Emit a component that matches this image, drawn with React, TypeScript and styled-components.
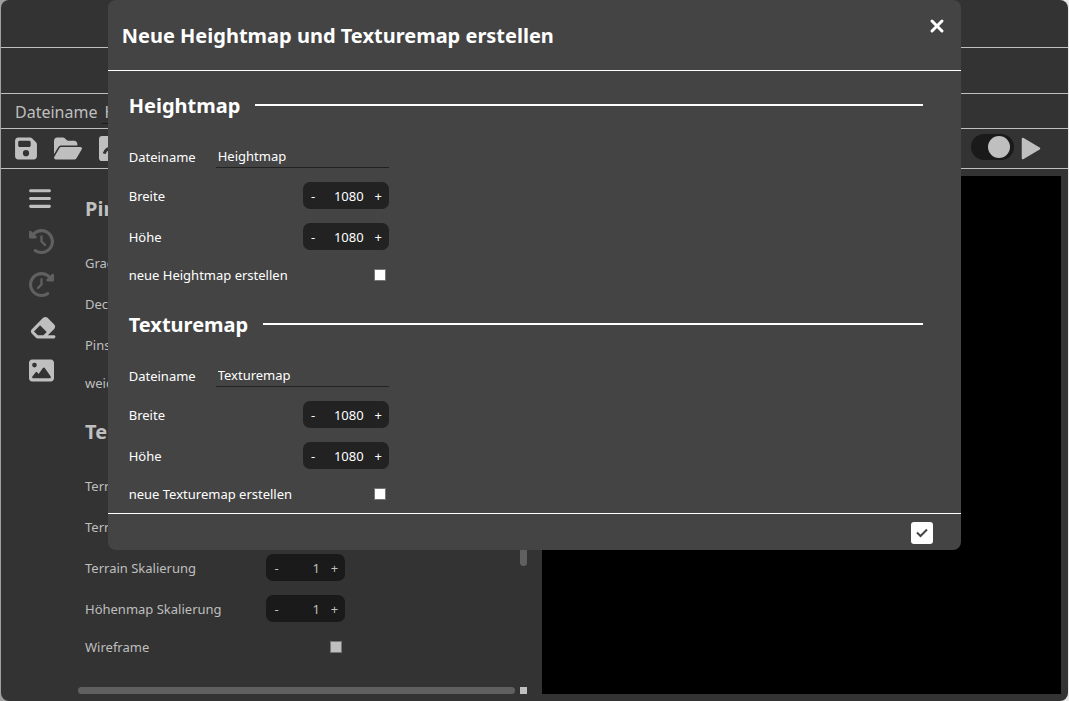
import React from 'react';
import styled, { createGlobalStyle } from 'styled-components';
import { FaBars, FaClockRotateLeft, FaEraser, FaFloppyDisk, FaFolderOpen, FaImage } from 'react-icons/fa6';

const GlobalStyle = createGlobalStyle`
  * { box-sizing: border-box; }
  body { margin: 0; background: linear-gradient(90deg, #a0a0a0 50%, #e8e8e8 50%); font-family: "Noto Sans", "Open Sans", sans-serif; font-size: 13px; }
  h1, h2 { margin: 0; }
  input { font: inherit; color: inherit; }
`;

const Frame = styled.div`
  position: relative;
  display: flex;
  flex-direction: column;
  min-height: 100vh;
  margin: 0 1px;
  overflow: hidden;
  border-radius: 8px;
  background: #333;
  color: #bfbfbf;
`;

const Bar = styled.div<{ $height: number }>`
  display: flex;
  align-items: center;
  height: ${(p) => p.$height}px;
  padding: 0 27px 0 14px;
  border-bottom: 1px solid #bfbfbf;
`;

const ProjectName = styled.label`
  display: flex;
  align-items: center;
  gap: 5px;
  padding-top: 2px;
  font-size: 16px;
`;

const ProjectInput = styled.input`
  width: 160px;
  height: 24px;
  padding: 0 2px;
  border: 0;
  border-bottom: 1px solid #1a1a1a;
  background: none;
`;

const FileTools = styled.div`
  display: flex;
  align-items: center;
  gap: 17px;
  flex: 1;
`;

const RunTools = styled.div`
  display: flex;
  align-items: center;
  gap: 7px;
`;

const Toggle = styled.input`
  appearance: none;
  display: flex;
  align-items: center;
  justify-content: flex-end;
  width: 43px;
  height: 26px;
  margin: 0 0 4px;
  padding: 0 4px;
  border-radius: 13px;
  background: #1a1a1a;
  &::before {
    content: "";
    width: 22px;
    height: 22px;
    border-radius: 50%;
    background: #bfbfbf;
  }
`;

const Workspace = styled.main`
  flex: 1;
  display: grid;
  grid-template-columns: 1fr 1fr;
  gap: 15px;
  padding: 7px;
`;

const Editor = styled.section`
  display: flex;
  min-width: 0;
`;

const ToolColumn = styled.nav`
  display: flex;
  flex-direction: column;
  align-items: flex-start;
  gap: 18px;
  width: 70px;
  padding: 10px 0 0 21px;
`;

const PlainButton = styled.button`
  display: flex;
  align-items: center;
  justify-content: center;
  padding: 0;
  border: 0;
  background: none;
  color: inherit;
  font: inherit;
  cursor: pointer;
`;

const Tool = styled(PlainButton)<{ $mirrored?: boolean; $width?: number }>`
  height: 25px;
  transform: ${(p) => (p.$mirrored ? 'scaleX(-1)' : 'none')};
  svg {
    width: ${(p) => p.$width ?? 25}px;
    height: 25px;
  }
  &:disabled { color: #606060; }
`;

const ScrollPane = styled.div`
  flex: 1;
  display: grid;
  grid-template-columns: 1fr 7px;
  grid-template-rows: 1fr 7px;
  gap: 5px;
`;

const ThumbX = styled.div`
  border-radius: 4px;
  background: #606060;
`;

const ThumbY = styled.div`
  height: 77%;
  border-radius: 4px;
  background: #606060;
`;

const ScrollCorner = styled.div`
  background: #bfbfbf;
`;

const Settings = styled.div`
  display: flex;
  flex-direction: column;
  gap: 23px;
  width: 267px;
  padding: 18px 0 0 7px;
`;

const Viewport = styled.div`
  background: #000;
`;

const Group = styled.section`
  display: flex;
  flex-direction: column;
  gap: 25px;
`;

const GroupTitle = styled.h2`
  display: flex;
  align-items: center;
  gap: 15px;
  font-size: 20px;
  line-height: 30px;
`;

const Rule = styled.span`
  flex: 1;
  height: 2px;
  margin-bottom: 2px;
  background: #fff;
`;

const Fields = styled.div`
  display: flex;
  flex-direction: column;
  gap: 14px;
  max-width: 260px;
`;

const Field = styled.div<{ $height: number }>`
  display: flex;
  align-items: center;
  justify-content: space-between;
  height: ${(p) => p.$height}px;
`;

const StepperBox = styled.div<{ $wide?: boolean }>`
  display: flex;
  align-items: center;
  width: ${(p) => (p.$wide ? 86 : 79)}px;
  height: 27px;
  border-radius: 7px;
  background: ${(p) => (p.$wide ? '#222' : '#1a1a1a')};
`;

const StepButton = styled(PlainButton)`
  width: 21px;
  height: 27px;
`;

const StepValue = styled.input`
  flex: 1;
  min-width: 0;
  padding: 0 4px 0 0;
  border: 0;
  background: none;
  text-align: right;
`;

const Tick = styled.input`
  appearance: none;
  width: 12px;
  height: 12px;
  margin: 0 3px 0 0;
  border: 1px solid #767676;
  background: currentColor;
`;

const NameInput = styled.input`
  width: 173px;
  height: 22px;
  padding: 0 2px 2px;
  border: 0;
  border-bottom: 1px solid #222;
  background: none;
`;

const Dialog = styled.div`
  position: absolute;
  top: 0;
  left: 10%;
  width: 80%;
  border-radius: 8px;
  background: #444;
  color: #fff;
`;

const DialogHeader = styled.header`
  display: flex;
  align-items: center;
  justify-content: space-between;
  height: 71px;
  padding: 0 14px;
  border-bottom: 1px solid #fff;
`;

const DialogTitle = styled.h1`
  padding-top: 2px;
  font-size: 20px;
  line-height: 30px;
`;

const CloseButton = styled(PlainButton)`
  width: 20px;
  height: 22px;
  margin-bottom: 18px;
`;

const DialogBody = styled.div`
  display: flex;
  flex-direction: column;
  gap: 24px;
  padding: 20px 38px 8px 21px;
`;

const DialogFooter = styled.footer`
  display: flex;
  align-items: center;
  justify-content: flex-end;
  height: 37px;
  padding: 2px 28px 0;
  border-top: 1px solid #fff;
`;

const ConfirmButton = styled(PlainButton)`
  width: 22px;
  height: 22px;
  border-radius: 3px;
  background: #fff;
`;

function NumberField({ id, label, value, wide }: { id: string; label: string; value: string; wide?: boolean }) {
  return (
    <Field $height={27}>
      <label htmlFor={id}>{label}</label>
      <StepperBox $wide={wide}>
        <StepButton type="button">-</StepButton>
        <StepValue id={id} defaultValue={value} />
        <StepButton type="button">+</StepButton>
      </StepperBox>
    </Field>
  );
}

function TickField({ id, label }: { id: string; label: string }) {
  return (
    <Field $height={22}>
      <label htmlFor={id}>{label}</label>
      <Tick id={id} type="checkbox" />
    </Field>
  );
}

function MapGroup({ name }: { name: string }) {
  return (
    <Group>
      <GroupTitle>{name}<Rule /></GroupTitle>
      <Fields>
        <Field $height={22}>
          <label htmlFor={`${name}-name`}>Dateiname</label>
          <NameInput id={`${name}-name`} defaultValue={name} />
        </Field>
        <NumberField id={`${name}-width`} label="Breite" value="1080" wide />
        <NumberField id={`${name}-height`} label="Höhe" value="1080" wide />
        <TickField id={`${name}-new`} label={`neue ${name} erstellen`} />
      </Fields>
    </Group>
  );
}

export default function App() {
  return (
    <>
      <GlobalStyle />
      <Frame>
        <Bar $height={48} />
        <Bar $height={46} />
        <Bar $height={35}>
          <ProjectName>Dateiname<ProjectInput defaultValue="H" /></ProjectName>
        </Bar>
        <Bar $height={40}>
          <FileTools>
            <Tool aria-label="Speichern" $width={22}><FaFloppyDisk /></Tool>
            <Tool aria-label="Öffnen" $width={28}><FaFolderOpen /></Tool>
            <Tool aria-label="Exportieren">
              <svg viewBox="0 0 24 24" fill="none">
                <rect width="24" height="24" rx="3" fill="currentColor" />
                <path d="M5 17C6 13 9 11 15 11M12 7l4 4-4 4" stroke="#333" strokeWidth="3" />
              </svg>
            </Tool>
          </FileTools>
          <RunTools>
            <Toggle type="checkbox" defaultChecked aria-label="Vorschau" />
            <Tool aria-label="Start" $width={20}>
              <svg viewBox="0 0 20 24">
                <path d="M2 2.500 18 12 2 21.500Z" fill="currentColor" stroke="currentColor" strokeWidth="2.500" strokeLinejoin="round" />
              </svg>
            </Tool>
          </RunTools>
        </Bar>
        <Workspace>
          <Editor>
            <ToolColumn>
              <Tool aria-label="Menü" $width={22}><FaBars /></Tool>
              <Tool aria-label="Rückgängig" disabled><FaClockRotateLeft /></Tool>
              <Tool aria-label="Wiederholen" disabled $mirrored><FaClockRotateLeft /></Tool>
              <Tool aria-label="Radierer" $width={28}><FaEraser /></Tool>
              <Tool aria-label="Textur"><FaImage /></Tool>
            </ToolColumn>
            <ScrollPane>
              <Settings>
                <Group>
                  <GroupTitle>Pins</GroupTitle>
                  <Fields>
                    <Field $height={27}>Grad</Field>
                    <Field $height={27}>Deck</Field>
                    <Field $height={27}>Pinsel</Field>
                    <Field $height={22}>weich</Field>
                  </Fields>
                </Group>
                <Group>
                  <GroupTitle>Terr</GroupTitle>
                  <Fields>
                    <Field $height={27}>Terra</Field>
                    <Field $height={27}>Terra</Field>
                    <NumberField id="t-scale" label="Terrain Skalierung" value="1" />
                    <NumberField id="h-scale" label="Höhenmap Skalierung" value="1" />
                    <TickField id="wire" label="Wireframe" />
                  </Fields>
                </Group>
              </Settings>
              <ThumbY />
              <ThumbX />
              <ScrollCorner />
            </ScrollPane>
          </Editor>
          <Viewport />
        </Workspace>
        <Dialog role="dialog" aria-labelledby="dialog-title">
          <DialogHeader>
            <DialogTitle id="dialog-title">Neue Heightmap und Texturemap erstellen</DialogTitle>
            <CloseButton aria-label="Schließen">
              <svg width="16" height="16" viewBox="0 0 16 16" fill="none" stroke="currentColor" strokeWidth="3" strokeLinecap="round">
                <path d="M3 3 13 13M13 3 3 13" />
              </svg>
            </CloseButton>
          </DialogHeader>
          <DialogBody>
            <MapGroup name="Heightmap" />
            <MapGroup name="Texturemap" />
          </DialogBody>
          <DialogFooter>
            <ConfirmButton aria-label="Bestätigen">
              <svg width="22" height="22" viewBox="0 0 22 22" fill="none" stroke="#444" strokeWidth="2">
                <path d="M6 10.500 9.500 14 16 7.500" />
              </svg>
            </ConfirmButton>
          </DialogFooter>
        </Dialog>
      </Frame>
    </>
  );
}
